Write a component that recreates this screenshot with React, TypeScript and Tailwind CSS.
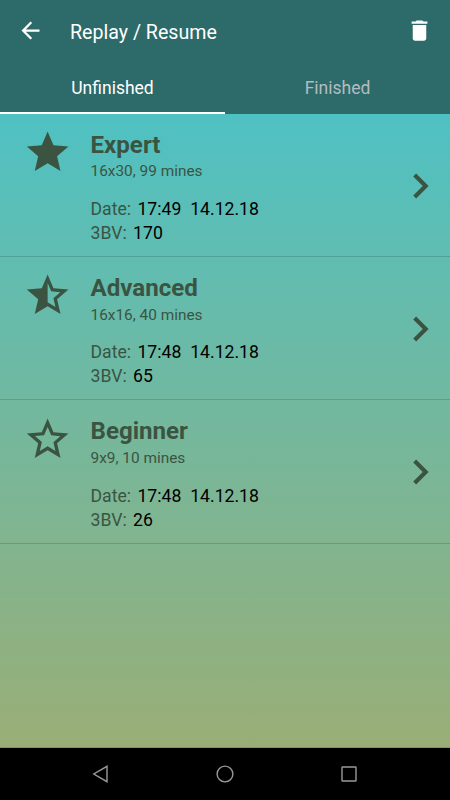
const starFull = 'M12 17.27L18.18 21l-1.64-7.03L22 9.24l-7.19-.61L12 2 9.19 8.63 2 9.24l5.46 4.73L5.82 21z';
const starHalf = 'M22 9.24l-7.19-.62L12 2 9.19 8.63 2 9.24l5.46 4.73L5.82 21 12 17.27 18.18 21l-1.63-7.03L22 9.24zM12 15.4V6.1l1.71 4.04 4.38.38-3.32 2.88 1 4.28L12 15.4z';
const starEmpty = 'M22 9.24l-7.19-.62L12 2 9.19 8.63 2 9.24l5.46 4.73L5.82 21 12 17.27 18.18 21l-1.63-7.03L22 9.24zM12 15.4l-3.76 2.27 1-4.28-3.32-2.88 4.38-.38L12 6.1l1.71 4.04 4.38.38-3.32 2.88 1 4.28L12 15.4z';

const games = [
  { name: 'Expert', info: '16x30, 99 mines', time: '17:49', bv: '170', star: starFull },
  { name: 'Advanced', info: '16x16, 40 mines', time: '17:48', bv: '65', star: starHalf },
  { name: 'Beginner', info: '9x9, 10 mines', time: '17:48', bv: '26', star: starEmpty },
];

type Game = (typeof games)[number];

function GameRow({ game }: { game: Game }) {
  return (
    <li className="flex h-[143.4px] items-start border-b border-black/15 pl-[22px] text-[#3b5442]">
      <svg viewBox="-0.3 -0.1 24 24" className="mt-[13.5px] size-[50px] shrink-0" fill="currentColor">
        <path d={game.star} />
      </svg>
      <div className="flex grow flex-col whitespace-pre pt-4 pl-[18.5px]">
        <h2 className="text-[24.1px] leading-[30px] font-bold">{game.name}</h2>
        <p className="pt-[0.6px] text-[15.4px] leading-[22px]">{game.info}</p>
        <p className="mt-[14.8px] text-[17.65px] leading-6">
          Date: <span className="ml-[2px] text-black">{game.time}{'  '}14.12.18</span>
        </p>
        <p className="text-[17.65px] leading-6">
          3BV: <span className="ml-[2px] text-black">{game.bv}</span>
        </p>
      </div>
      <svg viewBox="-0.15 0 24 24" className="mt-[47px] mr-[4.7px] size-[50px] shrink-0" fill="currentColor">
        <path d="M8.59 16.59L13.17 12 8.59 7.41 10 6l6 6-6 6-1.41-1.41z" />
      </svg>
    </li>
  );
}

export default function App() {
  return (
    <div className="flex h-[800px] w-[450px] flex-col overflow-hidden bg-black font-['Roboto',sans-serif]">
      <header className="flex h-[113.6px] shrink-0 flex-col bg-[#2d6a6a] text-white">
        <div className="flex h-[62px] items-center pl-[17px] pr-[17px]">
          <svg viewBox="0 0 24 24" className="size-[27px]" fill="currentColor">
            <path d="M20 11H7.83l5.59-5.59L12 4l-8 8 8 8 1.41-1.41L7.83 13H20v-2z" />
          </svg>
          <h1 className="grow pt-[5px] pl-[26px] text-[19.6px] leading-[23px]">Replay / Resume</h1>
          <svg viewBox="0 0 24 24" className="size-[27px]" fill="currentColor">
            <path d="M6 19c0 1.1.9 2 2 2h8c1.1 0 2-.9 2-2V7H6v12zM19 4h-3.5l-1-1h-5l-1 1H5v2h14V4z" />
          </svg>
        </div>
        <nav className="grid grow grid-cols-2 pt-[3px] text-center text-[17.5px] leading-[48px]">
          <span className="border-b-2 border-white">Unfinished</span>
          <span className="text-[#b3bcc0]">Finished</span>
        </nav>
      </header>
      <main className="h-[634.4px] shrink-0 border-b border-[#819561] bg-linear-to-b/srgb from-[#4fc1c3] to-[#9aae76]">
        <ul>
          {games.map((g) => (
            <GameRow key={g.name} game={g} />
          ))}
        </ul>
      </main>
      <footer className="flex grow items-center justify-between pl-[89px] pr-[89px] text-[#999]">
        <svg viewBox="0 0 24 24" className="size-6" fill="none" stroke="currentColor" strokeWidth="1.4">
          <path d="M18 4.3v15.4L4.8 12z" />
        </svg>
        <svg viewBox="0 0 24 24" className="size-6" fill="none" stroke="currentColor" strokeWidth="1.4">
          <circle cx="12" cy="12" r="7.9" />
        </svg>
        <svg viewBox="0 0 24 24" className="size-6" fill="none" stroke="currentColor" strokeWidth="1.4">
          <rect x="5" y="5" width="14" height="14" rx="0.5" />
        </svg>
      </footer>
    </div>
  );
}
